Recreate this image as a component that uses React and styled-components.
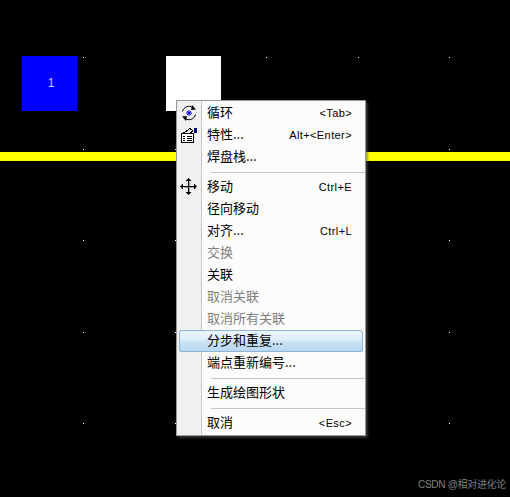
import React from 'react';
import styled, {createGlobalStyle} from 'styled-components';

const Global = createGlobalStyle`
html, body {
  margin: 0;
  background: #000;
}
`;

const Canvas = styled.div`
position: relative;
width: 510px;
height: 497px;
background: #000;
overflow: hidden;
font-family: "Noto Sans CJK SC", "Liberation Sans", sans-serif;
`;

const Dot = styled.i`
position: absolute;
width: 1px;
height: 1px;
background: #fff;
`;

const Pad = styled.div`
position: absolute;
top: 56px;
left: ${p => p.$left}px;
width: 55px;
height: 55px;
background: ${p => p.$color};
color: #c8c8ff;
display: flex;
align-items: center;
justify-content: center;
font: 12px "Liberation Sans", sans-serif;
font-weight: 300;
padding-bottom: 2px;
padding-left: 3px;
box-sizing: border-box;
`;

const Trace = styled.div`
position: absolute;
top: 152px;
left: 0;
width: 510px;
height: 9px;
background: #ff0;
`;

const Menu = styled.div`
position: absolute;
top: 100px;
left: 176px;
width: 190px;
height: 336px;
box-sizing: border-box;
padding: 1px 0;
border: 1px solid #979797;
background: linear-gradient(to right, #f0f0f0 0, #f0f0f0 24px, #c8c8c8 24px, #c8c8c8 25px, #fcfcfc 25px);
box-shadow: 2px 2px 2px rgba(90, 90, 90, 0.55);
font-size: 13px;
`;

const Row = styled.div`
height: 22px;
box-sizing: border-box;
margin: 0 2px;
padding: 0 11px 3px 0;
display: flex;
align-items: center;
color: ${p => (p.$disabled ? '#7f7f7f' : '#000')};
line-height: 19px;
border-radius: 3px;
${p => p.$active && `
  background: linear-gradient(to bottom, #eef6fc 0%, #dcedf9 45%, #c9e2f5 55%, #b6d6f0 100%);
  box-shadow: inset 0 0 0 1px #8fb4d6;
`}
`;

const Gutter = styled.span`
width: 28px;
height: 18px;
flex: none;
margin-top: 2px;
padding-left: 1px;
box-sizing: border-box;
display: flex;
`;

const Label = styled.span`
flex: 1;
`;

const Shortcut = styled.span`
padding-top: 3px;
font-family: "Liberation Sans", sans-serif;
font-size: 11px;
letter-spacing: 0.4px;
`;

const Separator = styled.div`
height: 8px;
margin-left: 34px;
display: flex;
align-items: center;
&::after {
  content: '';
  flex: 1;
  height: 1px;
  background: #c8c8c8;
}
`;

const Watermark = styled.div`
position: absolute;
right: 4px;
bottom: 5px;
color: #808080;
font-size: 10px;
line-height: 14px;
letter-spacing: -0.3px;
font-family: "Liberation Sans", "Noto Sans CJK SC", sans-serif;
`;

const CycleIcon = () => (
  <svg width="18" height="18" viewBox="0 0 18 18">
    <path d="M2.5 7.5 A6.8 6.8 0 0 1 13 3.5" fill="none" stroke="#000" strokeWidth="1" />
    <path d="M15.5 10.5 A6.8 6.8 0 0 1 5 14.5" fill="none" stroke="#000" strokeWidth="1" />
    <path d="M12 1 L16 5.5 L11 6 Z M6 17 L2 12.5 L7 12 Z" fill="#000" />
    <path d="M9 6 V12 M6 9 H12 M7 7 L11 11 M11 7 L7 11" stroke="#0000e0" strokeWidth="1" />
  </svg>
);

const PropsIcon = () => (
  <svg width="18" height="18" viewBox="0 0 18 18" shapeRendering="crispEdges">
    <path d="M1.5 7.5 H13.5 V16.5 H1.5 Z" fill="#fff" stroke="#000" />
    <path d="M3.5 7 L10 2.5 L13 5 L9 7.5 Z" fill="#e4e4e4" stroke="#000" />
    <path d="M3 10 H5 M7 10 H12 M3 12 H5 M7 12 H12 M3 14 H5 M7 14 H12" stroke="#000" />
    <rect x="14" y="2" width="3" height="5" fill="#000080" />
  </svg>
);

const MoveIcon = () => (
  <svg width="18" height="18" viewBox="0 0 18 18" shapeRendering="crispEdges">
    <path d="M9 3 H10 V8 H15 V9 H10 V14 H9 V9 H4 V8 H9 Z" fill="#a0a0a0" transform="translate(0 1)" />
    <path d="M8 3 H9 V8 H14 V9 H9 V14 H8 V9 H3 V8 H8 Z" fill="#000" />
    <path d="M8.5 0 L11.5 3 H5.5 Z M8.5 17 L5.5 14 H11.5 Z M0 8.5 L3 5.5 V11.5 Z M17 8.5 L14 5.5 V11.5 Z" fill="#000" shapeRendering="auto" />
  </svg>
);

const items = [
  {label: '循环', shortcut: '<Tab>', icon: <CycleIcon />},
  {label: '特性...', shortcut: 'Alt+<Enter>', icon: <PropsIcon />},
  {label: '焊盘栈...'},
  {sep: true},
  {label: '移动', shortcut: 'Ctrl+E', icon: <MoveIcon />},
  {label: '径向移动'},
  {label: '对齐...', shortcut: 'Ctrl+L'},
  {label: '交换', disabled: true},
  {label: '关联'},
  {label: '取消关联', disabled: true},
  {label: '取消所有关联', disabled: true},
  {label: '分步和重复...', active: true},
  {label: '端点重新编号...'},
  {sep: true},
  {label: '生成绘图形状'},
  {sep: true},
  {label: '取消', shortcut: '<Esc>'},
];

const dotXs = [83, 175, 266, 358, 449];
const dotYs = [57, 149, 240, 332, 423];

const App = () => {
  return (
    <Canvas>
      <Global />
      {dotYs.map(y => dotXs.map(x => <Dot key={x + '-' + y} style={{left: x, top: y}} />))}
      <Trace />
      <Pad $left={22} $color="#0000ff">1</Pad>
      <Pad $left={166} $color="#fff" />
      <Menu>
        {items.map((item, i) => {
          if (item.sep) return <Separator key={i} />;
          return (
            <Row key={i} $disabled={item.disabled} $active={item.active}>
              <Gutter>{item.icon}</Gutter>
              <Label>{item.label}</Label>
              {item.shortcut && <Shortcut>{item.shortcut}</Shortcut>}
            </Row>
          );
        })}
      </Menu>
      <Watermark>CSDN @相对进化论</Watermark>
    </Canvas>
  );
};

export default App;
